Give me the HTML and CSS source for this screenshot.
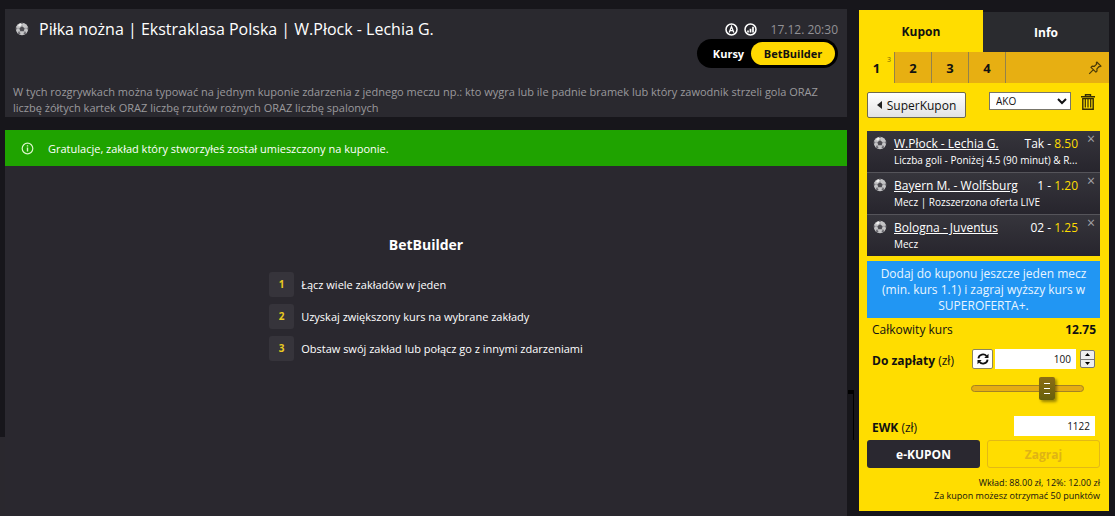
FILE: index.html
```html
<!DOCTYPE html>
<html lang="pl">
<head>
    <meta charset="UTF-8">
    <meta name="viewport" content="width=device-width, initial-scale=1.0">
    <title>BetBuilder</title>
    <link rel="stylesheet" href="styles.css">
</head>
<body>
    <svg class="defs" aria-hidden="true">
        <symbol id="ball" viewBox="0 0 14 14">
            <circle cx="7" cy="7" r="6.2" fill="#c4c4c6"/>
            <path d="M3 3.2Q5 .8 8 1.2L7 3 4.500 4.500z" fill="#f2f2f2"/>
            <path d="M7 4.200l2.700 2-1 3.100H5.300l-1-3.100z" fill="#4d4c52"/>
            <path d="M5.600.9h2.800L7 2.300zM12.800 5v3l-1.300-1.600zM1.200 5v3l1.300-1.600zM2.900 11.500l.6-1.900 1.900 1.400-.3 1.600zM11.100 11.500l-.6-1.900-1.900 1.400.3 1.600z" fill="#66656b"/>
            <path d="M7 2.300v2M11.500 6l-1.800.4M2.500 6l1.800.4M3.600 9.800l1.700-.6M10.400 9.800l-1.700-.6" stroke="#88878c" stroke-width=".6"/>
        </symbol>
    </svg>
    <div class="page">
        <main class="main">
            <header class="event">
                <div class="event-top">
                    <svg class="ball"><use href="#ball"/></svg>
                    <h1>Piłka nożna | Ekstraklasa Polska | W.Płock - Lechia G.</h1>
                    <div class="event-info">
                        <svg class="badge" viewBox="0 0 13 13" fill="none" stroke="#fff">
                            <circle cx="6.500" cy="6.500" r="5.500" stroke-width="1.500"/>
                            <path d="M4.200 9.500L6.500 3.600l2.300 5.900M5 7.700h3" stroke-width="1.300"/>
                        </svg>
                        <svg class="badge" viewBox="0 0 13 13" fill="none" stroke="#fff">
                            <circle cx="6.500" cy="6.500" r="5.500" stroke-width="1.500"/>
                            <path d="M4 9.500V7.500M6.500 9.500V5.800M9 9.500V3.800" stroke-width="1.700"/>
                        </svg>
                        <time>17.12. 20:30</time>
                    </div>
                </div>
                <div class="switch">
                    <button>Kursy</button>
                    <button class="active">BetBuilder</button>
                </div>
                <p>W tych rozgrywkach można typować na jednym kuponie zdarzenia z jednego meczu np.: kto wygra lub ile padnie bramek lub który zawodnik strzeli gola ORAZ liczbę żółtych kartek ORAZ liczbę rzutów rożnych ORAZ liczbę spalonych</p>
            </header>

            <div class="message">
                <svg class="badge" viewBox="0 0 13 13" fill="none" stroke="#d9f5c8">
                    <circle cx="6.500" cy="6.500" r="5.300" stroke-width="1.200"/>
                    <path d="M6.500 3.200v1.300M6.500 5.500v4" stroke-width="1.400"/>
                </svg>
                <span>Gratulacje, zakład który stworzyłeś został umieszczony na kuponie.</span>
            </div>

            <section class="builder">
                <h2>BetBuilder</h2>
                <ol class="steps">
                    <li><span class="step">1</span>Łącz wiele zakładów w jeden</li>
                    <li><span class="step">2</span>Uzyskaj zwiększony kurs na wybrane zakłady</li>
                    <li><span class="step">3</span>Obstaw swój zakład lub połącz go z innymi zdarzeniami</li>
                </ol>
            </section>
        </main>

        <aside class="coupon">
            <nav class="tabs">
                <button class="tab active">Kupon</button>
                <button class="tab">Info</button>
            </nav>
            <div class="numbers">
                <button class="number active">1<sup>3</sup></button>
                <button class="number">2</button>
                <button class="number">3</button>
                <button class="number">4</button>
                <button class="pin" aria-label="Przypnij">
                    <svg viewBox="0 0 14 14" fill="none" stroke="#4a3a08" stroke-width="1.200" stroke-linejoin="round">
                        <path d="M8.800 1l4.200 4.200-1.200.5-.7-.2-2.200 2.400.1 2.200-1.100 1.100L3 6.300l1.100-1.100 2.300.1 2.300-2.200-.4-1zM5.400 8.700L1.200 12.900"/>
                    </svg>
                </button>
            </div>

            <div class="coupon-body">
                <div class="tools">
                    <button class="super">
                        <svg viewBox="0 0 5 8" fill="#222"><path d="M5 0v8L0 4z"/></svg>SuperKupon
                    </button>
                    <select aria-label="Rodzaj kuponu">
                        <option>AKO</option>
                    </select>
                    <button class="trash" aria-label="Usuń kupon">
                        <svg viewBox="0 0 14 16" fill="none" stroke="#352d05">
                            <path d="M4.500 2V.7h5V2M0 2.800h14" stroke-width="1.400"/>
                            <path d="M1.800 4.500v10.800h10.400V4.500" stroke-width="1.400"/>
                            <path d="M4.300 4.500v9M7 4.500v9M9.700 4.500v9M1.200 4.700h11.600" stroke-width="1.200"/>
                        </svg>
                    </button>
                </div>

                <ul class="bets">
                    <li class="bet">
                        <svg class="ball"><use href="#ball"/></svg>
                        <div class="bet-text">
                            <div class="bet-line"><a href="#">W.Płock - Lechia G.</a><span>Tak - <b>8.50</b></span></div>
                            <p>Liczba goli - Poniżej 4.5 (90 minut) &amp; R...</p>
                        </div>
                        <button class="remove" aria-label="Usuń">×</button>
                    </li>
                    <li class="bet">
                        <svg class="ball"><use href="#ball"/></svg>
                        <div class="bet-text">
                            <div class="bet-line"><a href="#">Bayern M. - Wolfsburg</a><span>1 - <b>1.20</b></span></div>
                            <p>Mecz | Rozszerzona oferta LIVE</p>
                        </div>
                        <button class="remove" aria-label="Usuń">×</button>
                    </li>
                    <li class="bet">
                        <svg class="ball"><use href="#ball"/></svg>
                        <div class="bet-text">
                            <div class="bet-line"><a href="#">Bologna - Juventus</a><span>02 - <b>1.25</b></span></div>
                            <p>Mecz</p>
                        </div>
                        <button class="remove" aria-label="Usuń">×</button>
                    </li>
                </ul>

                <p class="offer">Dodaj do kuponu jeszcze jeden mecz (min. kurs 1.1) i zagraj wyższy kurs w SUPEROFERTA+.</p>

                <div class="total"><span>Całkowity kurs</span><strong>12.75</strong></div>

                <div class="row">
                    <label for="stake"><strong>Do zapłaty</strong> (zł)</label>
                    <button class="refresh" aria-label="Odśwież">
                        <svg viewBox="0 0 12 12" fill="none" stroke="#111" stroke-width="1.800">
                            <path d="M1.400 5.400A4.600 4.600 0 0 1 9.600 3.200M10.600 6.600A4.600 4.600 0 0 1 2.400 8.800"/>
                            <path d="M11.500.8v4.200H7.300zM.5 11.200V7h4.200z" fill="#111" stroke="none"/>
                        </svg>
                    </button>
                    <input type="text" id="stake" value="100">
                    <div class="stepper">
                        <button aria-label="Więcej"><svg viewBox="0 0 5 3"><path d="M0 3h5L2.500 0z"/></svg></button>
                        <button aria-label="Mniej"><svg viewBox="0 0 5 3"><path d="M0 0h5L2.500 3z"/></svg></button>
                    </div>
                </div>
                <input type="range" class="slider" aria-label="Stawka" min="0" max="100" value="70">
                <div class="row">
                    <label for="win"><strong>EWK</strong> (zł)</label>
                    <input type="text" id="win" value="1122">
                </div>

                <div class="actions">
                    <button class="ekupon">e-KUPON</button>
                    <button class="play" disabled>Zagraj</button>
                </div>
                <p class="summary">Wkład: 88.00 zł, 12%: 12.00 zł<br>Za kupon możesz otrzymać 50 punktów</p>
            </div>
        </aside>
    </div>
</body>
</html>
```

FILE: styles.css
```css
* {
    box-sizing: border-box;
}
body {
    margin: 0;
    background: linear-gradient(#2a282e, #2a282e) left bottom / 5px 79px no-repeat #17161b;
    font-family: "Open Sans", "Noto Sans", sans-serif;
    font-size: 12px;
    color: #fff;
}
h1, h2, p, ul, ol {
    margin: 0;
    padding: 0;
}
ul, ol {
    list-style: none;
}
button, input, select {
    font-family: inherit;
    margin: 0;
    padding: 0;
}
button {
    border: none;
    background: none;
    color: inherit;
    cursor: pointer;
}
.defs {
    position: absolute;
    width: 0;
    height: 0;
}
.page {
    display: flex;
    gap: 12px;
    min-height: 100vh;
    padding: 9px 6px 0 5px;
}
.main {
    flex: 1;
    display: flex;
    flex-direction: column;
}
.ball {
    flex: none;
    width: 14px;
    height: 14px;
}
.badge {
    flex: none;
    width: 13px;
    height: 13px;
}

/* event header */
.event {
    margin-bottom: 13px;
    padding: 6px 0 1px 8px;
    background: #2a292f;
}
.event-top {
    display: flex;
    align-items: center;
    padding: 0 9px 0 2px;
}
h1 {
    flex: 1;
    margin-left: 10px;
    font-size: 16px;
    font-weight: 400;
    line-height: 28px;
}
.event-info {
    display: flex;
    align-items: center;
    gap: 6px;
    color: #929196;
}
.event-info time {
    margin-left: 8px;
}
.switch {
    display: flex;
    width: 141px;
    height: 29px;
    margin: -4px 9px 16px auto;
    padding: 3px;
    border-radius: 15px;
    background: #000;
    font-size: 11px;
}
.switch button {
    flex: 1;
    padding-left: 6px;
    border-radius: 12px;
    font-size: 11px;
    font-weight: 700;
}
.switch .active {
    flex: none;
    width: 84px;
    padding: 0;
    background: #ffd800;
    color: #111;
}
.event p {
    color: #9a999d;
    font-size: 11px;
    line-height: 16px;
}

/* green message */
.message {
    display: flex;
    align-items: center;
    gap: 14px;
    height: 36px;
    padding-left: 16px;
    background: #1fa300;
    font-size: 11px;
}

/* bet builder intro */
.builder {
    flex: 1;
    display: flex;
    flex-direction: column;
    align-items: center;
    padding-top: 69px;
    background: #2a282f;
}
h2 {
    margin-bottom: 17px;
    font-size: 14px;
    line-height: 20px;
}
.steps {
    display: grid;
    gap: 7px;
    font-size: 11px;
}
.steps li {
    display: flex;
    align-items: center;
    gap: 7px;
}
.step {
    width: 25px;
    border-radius: 3px;
    background: #36343b;
    color: #e9cb20;
    font-size: 10px;
    font-weight: 700;
    line-height: 25px;
    text-align: center;
}

/* coupon */
.coupon {
    position: relative;
    align-self: flex-start;
    width: 250px;
    margin-top: 1px;
    background: #ffdd00;
    color: #111;
}
.coupon::before {
    content: "";
    position: absolute;
    top: 380px;
    left: -11px;
    width: 5px;
    height: 46px;
    border-top: 4px solid #000;
    border-right: 1px solid #000;
}
.tabs {
    display: flex;
    align-items: flex-end;
    background: #17161b;
}
.tab {
    flex: 1;
    height: 40px;
    background: #2a2b2f;
    color: #fff;
    font-size: 12px;
    font-weight: 700;
}
.tab.active {
    flex: none;
    width: 124px;
    height: 42px;
    background: #ffdd00;
    color: #111;
}
.numbers {
    display: flex;
    height: 31px;
    background: #e7af12;
}
.number {
    position: relative;
    width: 37px;
    border-right: 1px solid #93824a;
    font-size: 13px;
    font-weight: 700;
}
.number.active {
    width: 36px;
    background: #ffdd00;
}
.number sup {
    position: absolute;
    top: 3px;
    right: 3px;
    color: #7a6700;
    font-size: 7px;
    font-weight: 400;
}
.pin {
    margin-left: auto;
    padding-right: 7px;
}
.pin svg {
    display: block;
    width: 14px;
    height: 14px;
}
.coupon-body {
    padding: 9px 9px 9px 8px;
}
.tools {
    display: flex;
    align-items: flex-start;
    margin-bottom: 13px;
}
.super {
    display: flex;
    align-items: center;
    justify-content: center;
    gap: 5px;
    width: 99px;
    height: 26px;
    border: 1px solid #6f6a4c;
    border-radius: 2px;
    background: linear-gradient(#fff, #e2e2e2);
    font-size: 12px;
}
.super svg {
    width: 5px;
    height: 8px;
}
.tools select {
    width: 82px;
    height: 18px;
    margin-left: 23px;
    padding-left: 2px;
    border: 1px solid #77756a;
    border-radius: 0;
    background: #fff;
    color: #111;
    font-size: 10px;
}
.trash {
    margin: 2px 0 0 10px;
}
.trash svg {
    display: block;
    width: 14px;
    height: 16px;
}

.bet {
    display: flex;
    height: 42px;
    padding: 5px 4px 0 6px;
    border-bottom: 1px solid #55545a;
    background: linear-gradient(#36353c, #27252d);
    color: #fff;
}
.bet:last-child {
    height: 41px;
    border-bottom: none;
}
.bet-text {
    flex: 1;
    margin-left: 7px;
}
.bet-line {
    display: flex;
    justify-content: space-between;
    line-height: 16px;
}
.bet a {
    color: #fff;
}
.bet b {
    color: #ffdd00;
    font-weight: 400;
}
.bet p {
    font-size: 10px;
    line-height: 16px;
}
.remove {
    align-self: flex-start;
    width: 10px;
    margin-left: 8px;
    color: #a5a4a8;
    font-size: 14px;
    line-height: 6px;
}
.offer {
    margin-top: 5px;
    padding: 5px 10px 4px;
    background: #2196f3;
    color: #e9f5ff;
    line-height: 16px;
    text-align: center;
}
.total {
    display: flex;
    justify-content: space-between;
    margin-bottom: 11px;
    padding: 4px 4px 0 5px;
    line-height: 16px;
}
.row {
    display: flex;
    align-items: center;
    height: 20px;
    padding: 0 5px;
}
.row label {
    flex: 1;
    padding-top: 2px;
}
.row input {
    width: 81px;
    height: 20px;
    padding-right: 5px;
    border: none;
    background: #fff;
    color: #111;
    font-size: 10px;
    text-align: right;
}
.refresh {
    width: 21px;
    height: 20px;
    margin-right: 2px;
    border: 1px solid #8b8560;
    border-radius: 2px;
    background: #fff;
}
.refresh svg {
    display: block;
    width: 12px;
    height: 12px;
    margin: auto;
}
.stepper {
    display: grid;
    width: 15px;
    height: 18px;
    margin-left: 4px;
    border: 1px solid #777;
    border-radius: 2px;
    background: #eee;
}
.stepper button {
    display: flex;
    align-items: center;
    justify-content: center;
}
.stepper button + button {
    border-top: 1px solid #777;
}
.stepper svg {
    width: 5px;
    height: 3px;
}
.slider {
    display: block;
    appearance: none;
    width: 113px;
    height: 24px;
    margin: 7px 16px 16px auto;
    background: none;
}
.slider::-webkit-slider-runnable-track {
    height: 7px;
    border: 1px solid #a48224;
    border-radius: 4px;
    background: #e5ad13;
}
.slider::-webkit-slider-thumb {
    appearance: none;
    width: 16px;
    height: 23px;
    margin-top: -9px;
    border-radius: 2px;
    background:
        linear-gradient(#fff, #fff) center 6px / 6px 1px no-repeat,
        linear-gradient(#fff, #fff) center 11px / 6px 1px no-repeat,
        linear-gradient(#fff, #fff) center 16px / 6px 1px no-repeat,
        linear-gradient(#8c6d14, #67600b);
    box-shadow: 2px 2px 3px rgba(0, 0, 0, 0.4);
}
.actions {
    display: grid;
    grid-template-columns: 1fr 1fr;
    gap: 7px;
    margin-top: 4px;
}
.actions button {
    height: 28px;
    border-radius: 3px;
    font-size: 12px;
    font-weight: 700;
}
.ekupon {
    background: #2a2830;
    color: #fff;
}
.play {
    border: 1px solid #e3b915;
    color: #dfb414;
}
.summary {
    margin-top: 8px;
    font-size: 9px;
    line-height: 13px;
    text-align: right;
}
```
